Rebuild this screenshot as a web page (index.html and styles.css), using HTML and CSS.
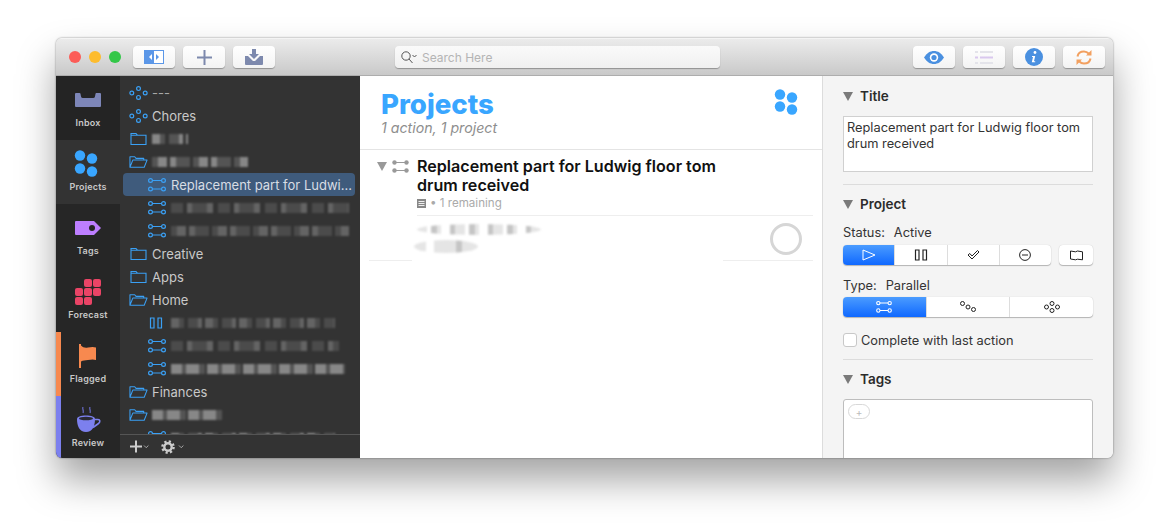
FILE: index.html
```html
<!DOCTYPE html>
<html lang="en">
<head>
<meta charset="utf-8">
<title>Projects</title>
<link rel="stylesheet" href="styles.css">
</head>
<body>
<svg class="defs" width="0" height="0" aria-hidden="true">
  <symbol id="i-par" viewBox="0 0 18 16"><g fill="none" stroke="currentColor" stroke-width="1.2"><circle cx="2.5" cy="3.5" r="1.9"/><circle cx="15.5" cy="3.5" r="1.9"/><circle cx="2.5" cy="12" r="1.9"/><circle cx="15.5" cy="12" r="1.9"/><path d="M4.4 3.5h9.2M4.4 12h9.2"/></g></symbol>
  <symbol id="i-single" viewBox="0 0 19 16"><g fill="none" stroke="currentColor" stroke-width="1.2"><circle cx="2.8" cy="8" r="1.9"/><circle cx="9.5" cy="3.6" r="1.9"/><circle cx="9.5" cy="12.4" r="1.9"/><circle cx="16.2" cy="8" r="1.9"/></g></symbol>
  <symbol id="i-folder" viewBox="0 0 17 14"><path d="M1 12.5V1.5h5l1.4 1.7H16v9.3zM1 3.2h6.4" fill="none" stroke="currentColor" stroke-width="1.1"/></symbol>
  <symbol id="i-open" viewBox="0 0 20 14"><path d="M1 12.5V1.5h5l1.4 1.7H15.5v1.8M1 12.5l3-7.5h15l-3 7.5z" fill="none" stroke="currentColor" stroke-width="1.1" stroke-linejoin="round"/></symbol>
  <symbol id="i-pause" viewBox="0 0 14 12"><path d="M1.5 1h3.500v10H1.500zM9 1h3.500v10H9z" fill="none" stroke="currentColor" stroke-width="1.2"/></symbol>
</svg>
<div class="window">
  <header class="titlebar">
    <div class="lights"><span class="light red"></span><span class="light amber"></span><span class="light green"></span></div>
    <div class="tools">
      <button class="tool"><svg width="20" height="14" viewBox="0 0 20 14"><rect x=".5" y=".5" width="19" height="13" fill="#fff" stroke="#5b97e8"/><rect width="10" height="14" fill="#5b97e8"/><path d="M8 4v6L5 7z" fill="#fff"/><path d="M12 4v6l3-3z" fill="#5b97e8"/></svg></button>
      <button class="tool"><svg width="15" height="15" viewBox="0 0 15 15"><path d="M7.500 0v15M0 7.500h15" stroke="#7d89ad" stroke-width="2"/></svg></button>
      <button class="tool"><svg width="18" height="16" viewBox="0 0 18 16"><path d="M7 0h4v5h3l-5 5-5-5h3z" fill="#7d89ad"/><path d="M0 7h3l5 5h2l5-5h3v8a1 1 0 0 1-1 1H1a1 1 0 0 1-1-1z" fill="#7d89ad"/></svg></button>
    </div>
    <div class="search">
      <svg width="16" height="13" viewBox="0 0 16 13"><circle cx="5" cy="5" r="4.200" fill="none" stroke="#555" stroke-width="1"/><path d="M8 8l3.500 4" stroke="#555" stroke-width="1"/><path d="M11.500 4l2 2 2-2" fill="none" stroke="#555" stroke-width="1"/></svg>
      <span class="search-text">Search Here</span>
    </div>
    <div class="tools right">
      <button class="tool"><svg width="20" height="13" viewBox="0 0 20 13"><path d="M0 6.500C3 2 6 0 10 0s7 2 10 6.500C17 11 14 13 10 13S3 11 0 6.500z" fill="#4a90e0"/><circle cx="10" cy="6.500" r="4.200" fill="#fff"/><circle cx="10" cy="6.500" r="2.600" fill="#4a90e0"/></svg></button>
      <button class="tool"><svg width="18" height="13" viewBox="0 0 18 13"><path d="M0 1h3M5 1h13M0 12h3M5 12h13" stroke="#e4e4ea" stroke-width="2"/><path d="M0 6.500h3M5 6.500h13" stroke="#d9c8ee" stroke-width="2"/></svg></button>
      <button class="tool"><svg class="info" width="18" height="18" viewBox="0 0 18 18"><circle cx="9" cy="9" r="9" fill="#4a90e0"/><circle cx="10" cy="4.500" r="1.400" fill="#fff"/><path d="M7 8h3.200L9 13.200h1.200v1H6.800l1.200-5.300H7z" fill="#fff"/></svg></button>
      <button class="tool"><svg width="16" height="15" viewBox="0 0 16 15"><g fill="none" stroke="#f2a060" stroke-width="2"><path d="M1.500 6.500C2 3.500 4.500 1.500 8 1.500c2 0 3.500.8 5 2.300"/><path d="M14.500 8.500c-.5 3-3 5-6.500 5-2 0-3.500-.8-5-2.300"/></g><path d="M15.500 0v5.500H10zM.5 15V9.500H6z" fill="#f2a060"/></svg></button>
    </div>
  </header>
  <div class="body">
    <nav class="rail">
      <div class="rail-item dark">
        <div class="rail-icon"><svg width="26" height="14" viewBox="0 0 26 14"><path d="M1 0h3.500a1 1 0 0 1 1 .8L6 3.500q.3 1.500 2 1.500h10q1.700 0 2-1.500l.5-2.700a1 1 0 0 1 1-.8H25a1 1 0 0 1 1 1v12a1 1 0 0 1-1 1H1a1 1 0 0 1-1-1V1a1 1 0 0 1 1-1z" fill="#7d86b8"/></svg></div>
        <span class="rail-label">Inbox</span>
      </div>
      <div class="rail-item active">
        <div class="rail-icon"><svg width="28" height="28" viewBox="0 0 28 28"><g fill="#39a6ff"><circle cx="6" cy="5.500" r="5.200"/><circle cx="18" cy="8.500" r="5.200"/><circle cx="6" cy="18.500" r="5.200"/><circle cx="18" cy="21.500" r="5.200"/></g></svg></div>
        <span class="rail-label">Projects</span>
      </div>
      <div class="rail-item">
        <div class="rail-icon"><svg width="26" height="14" viewBox="0 0 26 14"><path d="M1 0h18l7 7-7 7H1a1 1 0 0 1-1-1V1a1 1 0 0 1 1-1z" fill="#bd7eff"/><circle cx="17" cy="7" r="3" fill="#262626"/></svg></div>
        <span class="rail-label">Tags</span>
      </div>
      <div class="rail-item">
        <div class="rail-icon"><svg width="26" height="26" viewBox="0 0 26 26"><g fill="#ea4466"><rect x="9" width="8" height="8" rx="2"/><rect x="18" width="8" height="8" rx="2"/><rect y="9" width="8" height="8" rx="2"/><rect x="9" y="9" width="8" height="8" rx="2"/><rect x="18" y="9" width="8" height="8" rx="2"/><rect y="18" width="8" height="8" rx="2"/><rect x="9" y="18" width="8" height="8" rx="2"/></g></svg></div>
        <span class="rail-label">Forecast</span>
      </div>
      <div class="rail-item flagged">
        <div class="rail-icon"><svg width="18" height="24" viewBox="0 0 18 24"><path d="M0 0h2v24H0z" fill="#f7894f"/><path d="M2 1.500c2 2 4 2.500 7 2 3-.5 5-1 8 0v12.500c-3-1-5-.5-8 0s-5 0-7 1.500z" fill="#f7894f"/></svg></div>
        <span class="rail-label">Flagged</span>
      </div>
      <div class="rail-item review">
        <div class="rail-icon"><svg width="26" height="26" viewBox="0 0 26 26"><path d="M8 0c-1 2 1 3 0 6M15 0c-1 2 1 3 0 6" fill="none" stroke="#6669c4" stroke-width="1.200"/><path d="M2 12c0-2 3.500-3.500 9-3.500s9 1.500 9 3.500c0 7-2.500 13-9 13S2 19 2 12z" fill="#7c80ee"/><ellipse cx="11" cy="11.500" rx="7" ry="1.800" fill="#2a2a34"/><path d="M20 12.500h3c2.200 0 2.500 2.500.5 4l-5.500 4" fill="none" stroke="#7c80ee" stroke-width="1.600"/></svg></div>
        <span class="rail-label">Review</span>
      </div>
    </nav>
    <aside class="sidebar">
      <div class="list">
        <div class="row l1"><svg class="ico"><use href="#i-single"/></svg><span class="name dim">---</span></div>
        <div class="row l1"><svg class="ico"><use href="#i-single"/></svg><span class="name">Chores</span></div>
        <div class="row l1"><svg class="ico fold"><use href="#i-folder"/></svg><div class="smear s-a w36"></div></div>
        <div class="row l1"><svg class="ico"><use href="#i-open"/></svg><div class="smear s-b w96"></div></div>
        <div class="row l2 selected"><svg class="ico"><use href="#i-par"/></svg><span class="name">Replacement part for Ludwi...</span></div>
        <div class="row l2"><svg class="ico"><use href="#i-par"/></svg><div class="smear faint s-c w178"></div></div>
        <div class="row l2"><svg class="ico"><use href="#i-par"/></svg><div class="smear faint s-b w178"></div></div>
        <div class="row l1"><svg class="ico fold"><use href="#i-folder"/></svg><span class="name">Creative</span></div>
        <div class="row l1"><svg class="ico fold"><use href="#i-folder"/></svg><span class="name">Apps</span></div>
        <div class="row l1"><svg class="ico"><use href="#i-open"/></svg><span class="name">Home</span></div>
        <div class="row l2"><svg class="ico pause"><use href="#i-pause"/></svg><div class="smear faint s-a w164"></div></div>
        <div class="row l2"><svg class="ico"><use href="#i-par"/></svg><div class="smear faint s-c w168"></div></div>
        <div class="row l2"><svg class="ico"><use href="#i-par"/></svg><div class="smear s-d w174"></div></div>
        <div class="row l1"><svg class="ico"><use href="#i-open"/></svg><span class="name">Finances</span></div>
        <div class="row l1"><svg class="ico"><use href="#i-open"/></svg><div class="smear s-d w72"></div></div>
        <div class="row l2"><svg class="ico"><use href="#i-par"/></svg><div class="smear s-a w164"></div></div>
      </div>
      <div class="sidebar-foot">
        <svg width="19" height="13" viewBox="0 0 19 13"><path d="M6 .5v12M0 6.500h12" stroke="#ccc" stroke-width="2"/><path d="M14 5.500l2.200 2.200 2.200-2.200" fill="none" stroke="#aaa"/></svg>
        <svg width="23" height="14" viewBox="0 0 23 14"><circle cx="7" cy="7" r="3.700" fill="none" stroke="#ccc" stroke-width="2.400"/><circle cx="7" cy="7" r="5.600" fill="none" stroke="#ccc" stroke-width="2.400" stroke-dasharray="2.200 2.200"/><path d="M18 5.500l2.200 2.200 2.200-2.200" fill="none" stroke="#aaa"/></svg>
      </div>
    </aside>
    <main class="main">
      <div class="main-head">
        <div>
          <h1 class="main-title">Projects</h1>
          <p class="main-sub">1 action, 1 project</p>
        </div>
        <svg width="24" height="26" viewBox="0 0 24 26"><g fill="#39a6ff"><circle cx="6" cy="5.500" r="5.200"/><circle cx="18" cy="8.500" r="5.200"/><circle cx="6" cy="17.500" r="5.200"/><circle cx="18" cy="20.500" r="5.200"/></g></svg>
      </div>
      <div class="project">
        <span class="disclose main-disc"></span>
        <svg class="proj-ico" width="17" height="13" viewBox="0 0 17 13"><g fill="#999"><circle cx="2.500" cy="2.500" r="2.200"/><circle cx="14.500" cy="2.500" r="2.200"/><circle cx="2.500" cy="10.500" r="2.200"/><circle cx="14.500" cy="10.500" r="2.200"/></g><path d="M3 2.500h11M3 10.500h11" stroke="#999" stroke-width="1.200"/></svg>
        <div class="proj-body">
          <div class="proj-title">Replacement part for Ludwig floor tom drum received</div>
          <div class="proj-meta"><svg width="9" height="9" viewBox="0 0 9 9"><rect width="9" height="9" fill="#888"/><path d="M1.500 2.500h6M1.500 4.500h6M1.500 6.500h6" stroke="#eee"/></svg><span>• 1 remaining</span></div>
        </div>
      </div>
      <div class="action">
        <div class="action-text">
          <div class="smear light s-e w124"></div>
          <div class="smear light tall s-f w64"></div>
        </div>
        <span class="check-circle"></span>
      </div>
      <div class="action-line"></div>
    </main>
    <section class="inspector">
      <div class="sec-head"><span class="disclose"></span>Title</div>
      <div class="title-box">Replacement part for Ludwig floor tom drum received</div>
      <hr class="rule">
      <div class="sec-head tight"><span class="disclose"></span>Project</div>
      <div class="field"><span>Status:</span><span>Active</span></div>
      <div class="seg-row">
        <div class="seg status">
          <span class="cell on"><svg width="14" height="12" viewBox="0 0 14 12"><path d="M1 1l12 5-12 5z" fill="none" stroke="#fff"/></svg></span>
          <span class="cell"><svg width="14" height="12"><use href="#i-pause"/></svg></span>
          <span class="cell"><svg width="13" height="10" viewBox="0 0 13 10"><path d="M1 5l4 4 7-7-1.500-1.500L5 6 2.800 3.500z" fill="none" stroke="#222"/></svg></span>
          <span class="cell"><svg width="12" height="12" viewBox="0 0 12 12"><circle cx="6" cy="6" r="5.400" fill="none" stroke="#222"/><path d="M3 6h6" stroke="#222"/></svg></span>
        </div>
        <span class="seg-btn"><svg width="13" height="11" viewBox="0 0 13 11"><path d="M.5 1l5 .8 2-.8 5 .8v8l-5-.6-2 .6-5-.8z" fill="none" stroke="#222"/></svg></span>
      </div>
      <div class="field"><span>Type:</span><span>Parallel</span></div>
      <div class="seg type-seg">
        <span class="cell on"><svg width="16" height="14"><use href="#i-par"/></svg></span>
        <span class="cell"><svg width="16" height="12" viewBox="0 0 16 12"><g fill="none" stroke="#222"><circle cx="2.500" cy="2.500" r="2"/><circle cx="8" cy="6" r="2"/><circle cx="13.500" cy="8.500" r="2"/></g></svg></span>
        <span class="cell"><svg width="16" height="12" viewBox="0 0 16 12"><g fill="none" stroke="#222"><circle cx="2.500" cy="6" r="2"/><circle cx="8" cy="2.500" r="2"/><circle cx="8" cy="9.500" r="2"/><circle cx="13.500" cy="6" r="2"/></g></svg></span>
      </div>
      <label class="complete"><span class="box"></span>Complete with last action</label>
      <hr class="rule">
      <div class="sec-head tight"><span class="disclose"></span>Tags</div>
      <div class="tags-box"><span class="tag-add">+</span></div>
    </section>
  </div>
</div>
</body>
</html>
```
FILE: styles.css
```css
* { box-sizing: border-box; }
html, body { height: 100%; }
body {
  margin: 0;
  padding: 38px 56px 0;
  background: #fff;
  overflow: hidden;
  font-family: Inter, "Liberation Sans", sans-serif;
}
.defs { position: absolute; }
.window {
  width: 1057px;
  height: 420px;
  border-radius: 6px;
  overflow: hidden;
  display: flex;
  flex-direction: column;
  background: #f4f4f4;
  box-shadow: 0 22px 38px rgba(0,0,0,.36), 0 0 2px rgba(0,0,0,.5);
}
.titlebar {
  height: 38px;
  flex: none;
  display: flex;
  align-items: center;
  background: linear-gradient(#ebebeb, #c9c9c9);
  border-top: 1px solid #f4f4f4;
  border-bottom: 1px solid #adadad;
}
.lights { display: flex; gap: 8px; margin-left: 13px; }
.light { width: 12px; height: 12px; border-radius: 50%; }
.red { background: #fc5c57; }
.amber { background: #fdbc2d; }
.green { background: #33c748; }
.tools { display: flex; gap: 8px; margin-left: 12px; }
.tools.right { margin-left: auto; margin-right: 8px; }
.tool {
  width: 42px;
  height: 22px;
  padding: 0;
  border: 0;
  border-radius: 4px;
  display: flex;
  align-items: center;
  justify-content: center;
  background: linear-gradient(#fff, #f3f3f3);
  box-shadow: 0 1px 1px rgba(0,0,0,.3);
}
.search {
  width: 325px;
  height: 22px;
  margin-left: 120px;
  padding-left: 6px;
  display: flex;
  align-items: center;
  gap: 5px;
  border-radius: 4px;
  background: linear-gradient(#fafafa, #f0f0f0);
  box-shadow: 0 1px 1px rgba(0,0,0,.3);
}
.search-text { font-size: 12px; color: #b4b4b4; }

.body { flex: 1; display: flex; min-height: 0; }
.rail { width: 64px; flex: none; background: #262626; display: flex; flex-direction: column; }
.rail-item { height: 64px; flex: none; padding-top: 7px; display: flex; flex-direction: column; align-items: center; }
.rail-item.dark { background: #242424; }
.rail-item.active { background: #333; }
.rail-item.flagged { box-shadow: inset 5px 0 0 #f7894f; }
.rail-item.review { box-shadow: inset 5px 0 0 #7c80ee; }
.rail-icon { height: 34px; display: flex; align-items: center; justify-content: center; }
.rail-label { font-size: 9px; line-height: 12px; font-weight: 600; color: #c8c8c8; letter-spacing: .2px; }

.sidebar { width: 240px; flex: none; background: #333; display: flex; flex-direction: column; color: #c9c9c9; }
.list { flex: 1; min-height: 0; overflow: hidden; padding-top: 5px; }
.row { height: 23px; display: flex; align-items: center; color: #3aa0f5; }
.row .name { font-size: 13px; color: #c9c9c9; white-space: nowrap; }
.row .name.dim { color: #a8a8a8; }
.row.l1 { padding-left: 9px; }
.row.l2 { padding-left: 28px; }
.ico { width: 19px; height: 16px; flex: none; margin-right: 4px; }
.l2 .ico { width: 18px; margin-right: 5px; }
.ico.fold { width: 17px; margin-left: 1px; margin-right: 5px; }
.ico.pause { width: 14px; margin-left: 1px; margin-right: 8px; }
.row.selected { margin: 0 5px 0 3px; padding-left: 25px; padding-right: 3px; background: #3f5b7c; border-radius: 4px; }
.selected .name { flex: 1; color: #d8dde4; }
.sidebar-foot {
  height: 24px;
  flex: none;
  border-top: 1px solid #555;
  padding-left: 10px;
  display: flex;
  align-items: center;
  gap: 12px;
}

.smear {
  height: 10px;
  filter: blur(1.1px);
  --c: rgba(205,205,205,.55);
  --d: rgba(205,205,205,.22);
}
.smear.faint { --c: rgba(205,205,205,.32); --d: rgba(205,205,205,.16); }
.smear.light { --c: rgba(150,150,150,.55); --d: rgba(170,170,170,.3); height: 11px; filter: blur(.8px); }
.smear.light.tall { height: 13px; }
.s-a { background: repeating-linear-gradient(90deg, var(--c) 0 8px, var(--d) 8px 13px, transparent 13px 17px, var(--d) 17px 27px, var(--c) 27px 31px, transparent 31px 34px); }
.s-b { background: repeating-linear-gradient(90deg, var(--d) 0 6px, var(--c) 6px 15px, transparent 15px 18px, var(--c) 18px 24px, var(--d) 24px 38px, transparent 38px 41px); }
.s-c { background: repeating-linear-gradient(90deg, var(--d) 0 12px, transparent 12px 16px, var(--c) 16px 21px, var(--d) 21px 36px, var(--c) 36px 42px, transparent 42px 47px); }
.s-d { background: repeating-linear-gradient(90deg, var(--c) 0 11px, var(--d) 11px 15px, var(--c) 15px 28px, var(--d) 28px 34px, transparent 34px 36px); }
.s-e { background: repeating-linear-gradient(90deg, var(--d) 0 10px, transparent 10px 14px, var(--c) 14px 20px, var(--d) 20px 24px, transparent 24px 33px, var(--c) 33px 38px); }
.s-f { background: linear-gradient(90deg, var(--d) 0 12px, transparent 12px 20px, var(--d) 20px 42px, var(--c) 42px 48px, var(--d) 48px 64px); }
.w36 { width: 36px; }
.w64 { width: 64px; margin-left: -3px; }
.w72 { width: 72px; }
.w96 { width: 96px; }
.w124 { width: 124px; }
.w164 { width: 164px; }
.w168 { width: 168px; }
.w174 { width: 174px; }
.w178 { width: 178px; }

.main { flex: 1; min-width: 0; background: #fff; border-right: 1px solid #dcdcdc; }
.main-head {
  height: 74px;
  padding: 13px 24px 0 21px;
  display: flex;
  justify-content: space-between;
  align-items: flex-start;
  border-bottom: 1px solid #e4e4e4;
}
.main-title { margin: 0; font-size: 27.6px; line-height: 30px; font-weight: 800; color: #39a6ff; }
.main-sub { margin: 0; font-size: 14.2px; line-height: 18px; font-style: italic; color: #8e8e8e; }
.disclose { width: 0; height: 0; flex: none; border-left: 5px solid transparent; border-right: 5px solid transparent; border-top: 9px solid #7a7a7a; }
.project { display: flex; padding: 7px 0 0 17px; }
.main-disc { margin-top: 5px; border-top-color: #999; }
.proj-ico { margin: 3px 8px 0 5px; flex: none; }
.proj-body { width: 396px; height: 59px; border-bottom: 1px solid #eee; }
.proj-title { width: 320px; font-size: 16.1px; line-height: 19px; font-weight: 600; color: #111; }
.proj-meta { margin-top: 2px; display: flex; align-items: center; gap: 4px; font-size: 11.6px; line-height: 12px; color: #aaa; }
.action { height: 44px; margin-left: 57px; width: 396px; display: flex; justify-content: space-between; align-items: center; }
.action-text { display: flex; flex-direction: column; gap: 5px; }
.check-circle { width: 32px; height: 32px; margin: 2px 11px 0 0; border-radius: 50%; border: 3px solid #d6d6d6; }
.action-line { height: 1px; margin-left: 9px; width: 444px; background: linear-gradient(90deg, #eee 0 43px, #fff 43px 354px, #eee 354px); }

.inspector { width: 290px; flex: none; padding: 12px 20px 0; background: #f4f4f4; overflow: hidden; }
.sec-head { display: flex; align-items: center; gap: 7px; height: 16px; font-size: 13.5px; font-weight: 600; color: #2b2b2b; }
.sec-head.tight { margin-top: 11px; }
.title-box {
  height: 56px;
  margin-top: 12px;
  padding: 3px;
  background: #fff;
  border: 1px solid #d0d0d0;
  font-size: 12.8px;
  line-height: 16px;
  color: #333;
}
.rule { height: 1px; margin: 12px 0 0; border: 0; background: #dcdcdc; }
.field { display: flex; gap: 9px; height: 16px; margin-top: 13px; font-size: 12.8px; line-height: 16px; color: #333; }
.seg-row { display: flex; justify-content: space-between; margin-top: 4px; }
.seg { display: flex; height: 20px; border-radius: 4px; overflow: hidden; background: #fff; box-shadow: 0 1px 1px rgba(0,0,0,.25), 0 0 1px rgba(0,0,0,.2); }
.seg.status { width: 208px; }
.seg.type-seg { margin-top: 3px; }
.cell { flex: 1; display: flex; align-items: center; justify-content: center; color: #222; border-left: 1px solid #ddd; }
.cell:first-child { border-left: 0; }
.cell.on { background: linear-gradient(#4b9cff, #0f68ff); color: #fff; }
.seg-btn { width: 34px; height: 20px; display: flex; align-items: center; justify-content: center; background: #fff; border-radius: 4px; box-shadow: 0 1px 1px rgba(0,0,0,.25), 0 0 1px rgba(0,0,0,.2); }
.complete { display: flex; align-items: center; gap: 4px; height: 14px; margin-top: 16px; font-size: 12.8px; color: #333; }
.box { width: 14px; height: 14px; background: #fff; border: 1px solid #c8c8c8; border-radius: 3px; }
.tags-box { height: 70px; margin-top: 12px; padding: 4px; background: #fff; border: 1px solid #bdbdbd; border-radius: 3px 3px 0 0; }
.tag-add { display: flex; align-items: center; justify-content: center; width: 22px; height: 15px; border: 1px solid #d8d8d8; border-radius: 8px; font-size: 10px; line-height: 1; color: #bbb; }
```
